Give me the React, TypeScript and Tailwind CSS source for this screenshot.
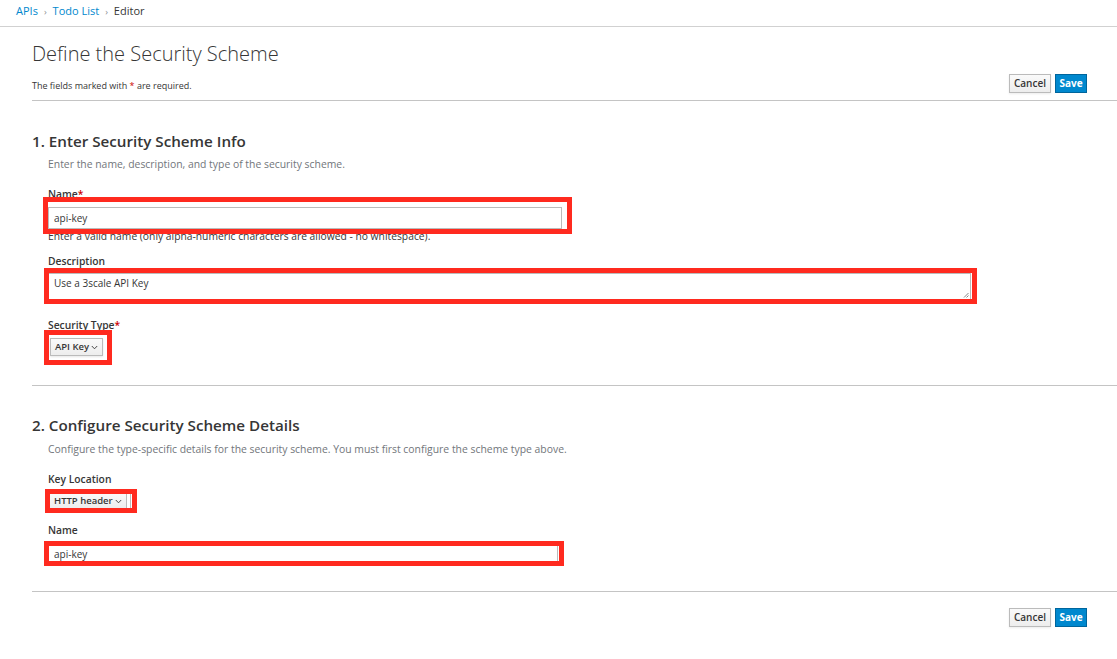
import React from "react";

const Chevron = () => (
  <svg width="7" height="5" viewBox="0 0 7 5" className="ml-[2px] mt-[1px]">
    <path d="M0.8 1 L3.5 3.8 L6.2 1" fill="none" stroke="#363636" strokeWidth="0.9" />
  </svg>
);

const Red = ({ cls }: { cls: string }) => (
  <div className={`pointer-events-none absolute border-[5px] border-[#ff2a1f] ${cls}`} />
);

const Buttons = () => (
  <div className="flex gap-[4px] mr-[30px]">
    <button className="h-[19px] w-[42px] border border-[#bbbbbb] bg-gradient-to-b from-[#fafafa] to-[#ededed] text-[10px] font-semibold text-[#363636] shadow-[0_1px_2px_rgba(0,0,0,0.08)]">
      Cancel
    </button>
    <button className="h-[19px] w-[32px] border border-[#00659c] bg-[#0088ce] text-[10px] font-bold text-white">
      Save
    </button>
  </div>
);

export default function App() {
  return (
    <div className="w-[1117px] h-[659px] bg-white font-['Open_Sans',sans-serif] text-[#363636] overflow-hidden">
      <div className="h-[27px] border-b border-[#d1d1d1] pl-[16px] flex items-center text-[11px] pb-[3px]">
        <span className="text-[#0088ce]">APIs</span>
        <span className="mx-[6px] text-[#8b8d8f] text-[9px]">›</span>
        <span className="text-[#0088ce]">Todo List</span>
        <span className="mx-[6px] text-[#8b8d8f] text-[9px]">›</span>
        <span className="text-[#363636]">Editor</span>
      </div>

      <div className="pl-[32px]">
        <div className="flex items-end justify-between border-b border-[#c4c4c4] pb-[7px]">
          <div>
            <h1 className="text-[20px] font-light leading-none mt-[17px] text-[#363636]">Define the Security Scheme</h1>
            <p className="text-[9px] mt-[15px]">
              The fields marked with <span className="text-[#cc0000]">*</span> are required.
            </p>
          </div>
          <Buttons />
        </div>

        <div className="border-b border-[#c4c4c4] pb-[29px]">
          <h2 className="text-[15.2px] font-semibold mt-[33px] leading-none">1. Enter Security Scheme Info</h2>
          <p className="text-[10.4px] text-[#72767b] ml-[16px] mt-[8px]">Enter the name, description, and type of the security scheme.</p>

          <div className="ml-[16px] mt-[16px]">
            <label className="block text-[10.3px] font-semibold leading-[12px]">
              Name<span className="text-[#cc0000]">*</span>
            </label>
            <div className="relative w-[514px] mt-[7px]">
              <input
                readOnly
                value="api-key"
                className="block w-[514px] h-[22px] border border-[#bbbbbb] px-[5px] text-[10px] text-[#363636] outline-none"
              />
              <Red cls="-left-[5px] -right-[10px] -top-[10px] -bottom-[5px]" />
            </div>
            <p className="text-[10.3px] leading-[12px] mt-[1px]">Enter a valid name (only alpha-numeric characters are allowed - no whitespace).</p>
          </div>

          <div className="ml-[16px] mt-[13px]">
            <label className="block text-[10.3px] font-semibold leading-[12px]">Description</label>
            <div className="relative w-[923px] mt-[6px]">
              <div className="w-[923px] h-[27px] border border-[#bbbbbb] px-[5px] pt-[2px] text-[10px] relative">
                Use a 3scale API Key
                <svg width="6" height="6" viewBox="0 0 6 6" className="absolute right-[1px] bottom-[1px]">
                  <path d="M5.5 1 L1 5.5 M5.5 3.5 L3.5 5.5" stroke="#555" strokeWidth="0.7" />
                </svg>
              </div>
              <Red cls="-left-[4px] -right-[6px] -top-[5px] -bottom-[4px]" />
            </div>
          </div>

          <div className="ml-[16px] mt-[19px]">
            <label className="block text-[10.3px] font-semibold leading-[12px]">
              Security Type<span className="text-[#cc0000]">*</span>
            </label>
            <div className="relative w-fit mt-[7px] ml-[2px]">
              <button className="h-[18px] flex items-center px-[4px] border border-[#bbbbbb] bg-gradient-to-b from-[#fafafa] to-[#ededed] text-[9.5px] font-semibold shadow-[0_1px_2px_rgba(0,0,0,0.1)]">
                API Key
                <Chevron />
              </button>
              <Red cls="-left-[6px] -right-[9px] -top-[8px] -bottom-[9px]" />
            </div>
          </div>
        </div>

        <div className="border-b border-[#c4c4c4] pb-[29px]">
          <h2 className="text-[15.2px] font-semibold mt-[32px] leading-none">2. Configure Security Scheme Details</h2>
          <p className="text-[10.4px] text-[#72767b] ml-[16px] mt-[8px]">
            Configure the type-specific details for the security scheme. You must first configure the scheme type above.
          </p>

          <div className="ml-[16px] mt-[16px]">
            <label className="block text-[10.3px] font-semibold leading-[12px]">Key Location</label>
            <div className="relative w-fit mt-[8px] ml-[1px]">
              <div className="flex items-center h-[16px]">
                <button className="h-[16px] flex items-center px-[4px] border border-[#bbbbbb] bg-gradient-to-b from-[#fafafa] to-[#ededed] text-[9.5px] font-semibold">
                  HTTP header
                  <Chevron />
                </button>
                <div className="w-[4px] h-[16px] border-r border-[#bbbbbb]" />
              </div>
              <Red cls="-left-[4px] -right-[6px] -top-[4px] -bottom-[4px]" />
            </div>
          </div>

          <div className="ml-[16px] mt-[15px]">
            <label className="block text-[10.3px] font-semibold leading-[12px]">Name</label>
            <div className="relative w-[510px] mt-[9px]">
              <input
                readOnly
                value="api-key"
                className="block w-[510px] h-[17px] border border-[#bbbbbb] px-[5px] text-[10px] text-[#363636] outline-none"
              />
              <Red cls="-left-[4px] -right-[6px] -top-[4px] -bottom-[4px]" />
            </div>
          </div>
        </div>

        <div className="flex justify-end mt-[16px]">
          <Buttons />
        </div>
      </div>
    </div>
  );
}
